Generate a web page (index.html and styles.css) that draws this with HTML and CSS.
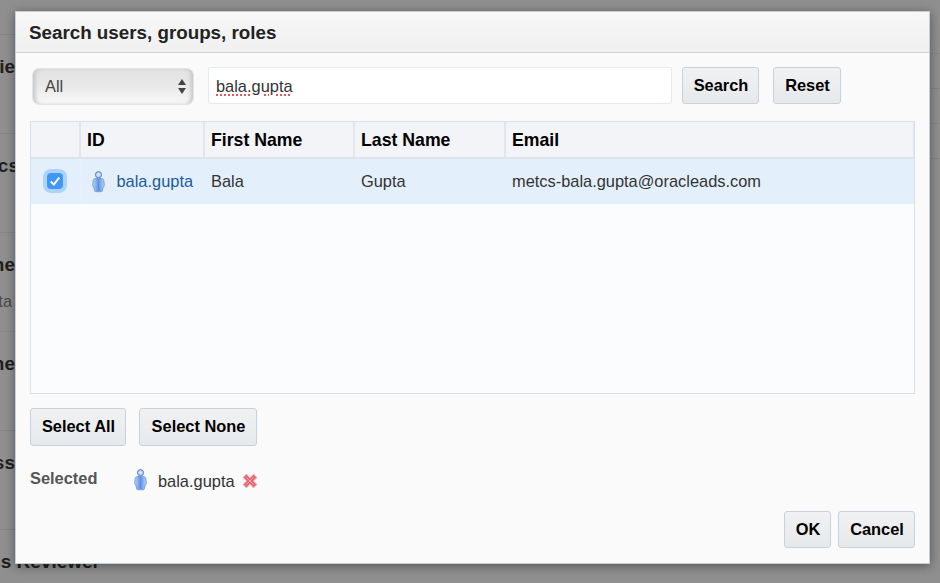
FILE: index.html
```html
<!DOCTYPE HTML>
<html lang="en">
<head>
  <title>Search users, groups, roles</title>
  <meta content="text/html;charset=utf-8" http-equiv="Content-type"/>
  <link rel="stylesheet" href="styles.css">
</head>
<body>
<svg class="defs" width="0" height="0" aria-hidden="true">
  <defs>
    <radialGradient id="personHead" cx="0.5" cy="0.5" r="0.6">
      <stop offset="0" stop-color="#e8f0fc"/>
      <stop offset="1" stop-color="#8fb1e8"/>
    </radialGradient>
    <linearGradient id="personBody" x1="0" y1="0" x2="1" y2="0">
      <stop offset="0" stop-color="#c2d5f2"/>
      <stop offset="0.5" stop-color="#5a92ea"/>
      <stop offset="1" stop-color="#c2d5f2"/>
    </linearGradient>
    <symbol id="person" viewBox="0 0 13 22">
      <circle cx="6.500" cy="3.700" r="3.100" fill="url(#personHead)" stroke="#5f86c2" stroke-width="1"/>
      <path d="M3.500 7.500h6c1.400 0 2.200.8 2.300 2.100l.5 4.800c.1 1-.4 1.500-1.300 1.500l-.5 3.600c-.1.800-.6 1.200-1.300 1.200H3.800c-.7 0-1.200-.4-1.300-1.200L2 15.900c-.9 0-1.400-.5-1.300-1.500l.5-4.800c.1-1.300.9-2.100 2.300-2.100z" fill="url(#personBody)" stroke="#7c9fd2" stroke-width="1"/>
    </symbol>
    <symbol id="remove" viewBox="0 0 16 16">
      <path d="M4.500 1 8 4.800 11.500 1 15 4.500 11.500 8l3.500 3.500-3.500 3.500L8 11.200 4.500 15 1 11.500 4.500 8 1 4.500z" fill="#f0636f" stroke="#d2cccc" stroke-width="1"/>
      <path d="M4.500 4.500 8 8l3.500-3.500M4.500 11.500 8 8l3.500 3.500" fill="none" stroke="#f8a9af" stroke-width="1"/>
    </symbol>
  </defs>
</svg>

<!-- page behind the dialog -->
<div class="backdrop">
  <div class="rows">
    <div class="row"><div class="rowTitle">ie</div></div>
    <div class="row"><div class="rowTitle rowTitleCs">ics</div></div>
    <div class="row"><div class="rowTitle">ne</div><div class="rowSub">ta</div></div>
    <div class="row"><div class="rowTitle">ne</div></div>
    <div class="row"><div class="rowTitle">ss</div></div>
    <div class="row rowLast"><div class="rowTitle rowTitleLong">ss Reviewer</div></div>
  </div>
  <div class="sideLines">
    <div class="sideLine"></div>
    <div class="sideLine"></div>
    <div class="sideLine"></div>
    <div class="sideLine"></div>
  </div>
</div>

<div class="dialog">
  <div class="dialogHeader">Search users, groups, roles</div>
  <div class="dialogBody">
    <div class="searchBar">
      <div class="selectWrap">
        <select class="typeSelect"><option>All</option></select>
        <svg class="selectArrows" width="8" height="15" viewBox="0 0 8 15"><path d="M4 0 8 6H0zM0 9h8l-4 6z" fill="#444"/></svg>
      </div>
      <input class="searchInput" type="text" value="bala.gupta"/>
      <button class="btn btnSearch">Search</button>
      <button class="btn btnReset">Reset</button>
    </div>

    <div class="results">
      <table>
        <colgroup>
          <col class="colCheck"><col class="colId"><col class="colFirst"><col class="colLast"><col>
        </colgroup>
        <thead>
        <tr>
          <th></th>
          <th>ID</th>
          <th>First Name</th>
          <th>Last Name</th>
          <th>Email</th>
        </tr>
        </thead>
        <tbody>
        <tr>
          <td class="checkCell">
            <span class="check">
              <svg width="12" height="12" viewBox="0 0 12 12"><path d="M1.800 6.500 4.800 9.500 10.200 2.600" fill="none" stroke="#fff" stroke-width="2"/></svg>
            </span>
          </td>
          <td><a class="userLink" href="#"><svg class="personIcon" width="13" height="22"><use href="#person"/></svg>bala.gupta</a></td>
          <td>Bala</td>
          <td>Gupta</td>
          <td>metcs-bala.gupta@oracleads.com</td>
        </tr>
        </tbody>
      </table>
    </div>

    <div class="selectBtns">
      <button class="btn btnSelectAll">Select All</button>
      <button class="btn btnSelectNone">Select None</button>
    </div>

    <div class="selectedRow">
      <div class="selectedLabel">Selected</div>
      <svg class="personIcon selectedIcon" width="13" height="22"><use href="#person"/></svg>
      <span class="selectedName">bala.gupta</span>
      <svg class="removeIcon" width="16" height="16"><use href="#remove"/></svg>
    </div>

    <div class="dialogFooter">
      <button class="btn btnOk">OK</button>
      <button class="btn btnCancel">Cancel</button>
    </div>
  </div>
</div>
</body>
</html>
```

FILE: styles.css
```css
html, body {
    margin: 0;
}

body {
    width: 940px;
    height: 583px;
    overflow: hidden;
    position: relative;
    font-family: 'Liberation Sans', Arial, sans-serif;
    font-size: 16.4px;
    color: #333;
    background-color: #8f8f8f;
}

.defs {
    position: absolute;
}

/* page behind the dialog */
.backdrop {
    height: 583px;
    overflow: hidden;
    display: flex;
    justify-content: space-between;
}

.rows {
    width: 15px;
    padding-top: 34px;
}

.row {
    height: 77px;
    padding-top: 21px;
    border-top: 1px solid #858585;
}

.rowLast {
    height: 22px;
}

/* titles run in from the left edge and end behind the dialog */
.rowTitle {
    display: flex;
    justify-content: flex-end;
    width: 15px;
    font-size: 19px;
    font-weight: bold;
    line-height: 22px;
    white-space: nowrap;
    color: #1f1f1f;
}

.rowTitleCs {
    width: 19px;
}

.rowTitleLong {
    width: 100px;
}

.rowSub {
    display: flex;
    justify-content: flex-end;
    width: 12px;
    margin-top: 16px;
    line-height: 18px;
    white-space: nowrap;
    color: #4a4a4a;
}

.sideLines {
    width: 10px;
    padding-top: 53px;
}

.sideLine {
    height: 34px;
    border-top: 1px solid #858585;
}

.dialog {
    position: absolute;
    left: 15px;
    top: 11px;
    width: 913px;
    height: 551px;
    display: flex;
    flex-direction: column;
    background: #fafafa;
    border: 1px solid #c3ced8;
    box-shadow: 0 2px 10px rgba(0, 0, 0, 0.4);
}

.dialogHeader {
    flex: none;
    height: 40px;
    padding-left: 13px;
    line-height: 41px;
    font-size: 18.8px;
    font-weight: bold;
    color: #222;
    background: linear-gradient(#f7f7f7, #f0f0f0);
    border-bottom: 1px solid #c5d5e2;
}

.dialogBody {
    flex: auto;
    display: flex;
    flex-direction: column;
    padding: 14px 14px 15px;
}

.searchBar {
    display: flex;
    align-items: flex-start;
    height: 54px;
}

.selectWrap {
    position: relative;
    width: 162px;
    height: 37px;
    margin: 1px 14px 0 2px;
}

.typeSelect {
    appearance: none;
    width: 100%;
    height: 100%;
    padding: 0 0 2px 12px;
    font-family: inherit;
    font-size: 16.4px;
    color: #444;
    border: 1px solid #e2e6ea;
    border-radius: 7px;
    background: linear-gradient(#e2e2e2, #e8e8e8 45%, #f8f8f8);
    box-shadow: inset 4px 0 4px -2px #c2c2c2, inset -4px 0 4px -2px #c2c2c2;
}

.selectArrows {
    position: absolute;
    right: 8px;
    top: 11px;
}

.searchInput {
    width: 464px;
    height: 37px;
    box-sizing: border-box;
    padding: 2px 7px 0;
    margin-right: 10px;
    font-family: inherit;
    font-size: 16.4px;
    color: #333;
    background: #fff;
    border: 1px solid #e6ebf0;
    border-radius: 2px;
    outline: none;
    text-decoration: underline dotted #e8555c 2px;
    text-underline-offset: 2px;
}

.btn {
    height: 37px;
    padding: 0 0 0 1px;
    white-space: nowrap;
    font-family: inherit;
    font-size: 16.4px;
    font-weight: bold;
    color: #000;
    background: linear-gradient(#f0f1f3, #e6e9eb);
    border: 1px solid #c5d2dd;
    border-radius: 3px;
}

.btnSearch {
    width: 77px;
    margin-right: 14px;
}

.btnReset {
    width: 68px;
}

.results {
    flex: none;
    height: 271px;
    overflow: hidden;
    border: 1px solid #d9e1e8;
    background: #fbfcfd;
}

table {
    border-collapse: collapse;
    width: 884px;
    table-layout: fixed;
}

.colCheck {
    width: 49px;
}

.colId {
    width: 124px;
}

.colFirst {
    width: 150px;
}

.colLast {
    width: 151px;
}

table th {
    height: 34px;
    padding: 1px 6px 0;
    text-align: left;
    font-size: 17.7px;
    color: #000;
    background: #f3f4f7;
    border-right: 2px solid #e1e6ec;
    border-bottom: 2px solid #dde4ec;
}

table td {
    height: 45px;
    padding: 0 7px;
    background: #e3f0fb;
    white-space: nowrap;
}

.checkCell {
    border-right: 1px solid #e9f0f7;
    text-align: center;
}

.check {
    display: inline-flex;
    align-items: center;
    justify-content: center;
    width: 16px;
    height: 16px;
    margin-bottom: 2px;
    vertical-align: middle;
    background: #3f98f7;
    border-radius: 4px;
    box-shadow: 0 0 0 4px #aed3f9;
}

.userLink {
    display: flex;
    align-items: center;
    color: #1c5a9c;
    text-decoration: none;
}

.personIcon {
    flex: none;
    margin: 0 12px 0 4px;
}

.selectBtns {
    display: flex;
    gap: 13px;
    margin-top: 14px;
}

.btnSelectAll {
    width: 96px;
    height: 38px;
    padding-bottom: 2px;
}

.btnSelectNone {
    width: 118px;
    height: 38px;
    padding-bottom: 2px;
}

.selectedRow {
    display: flex;
    align-items: center;
    height: 22px;
    margin-top: 24px;
}

.selectedLabel {
    width: 99px;
    margin-top: -6px;
    font-weight: bold;
    color: #555;
}

.selectedIcon {
    margin: -2px 11px 0 5px;
}

.selectedName {
    margin-right: 7px;
}

.removeIcon {
    flex: none;
}

.dialogFooter {
    display: flex;
    justify-content: flex-end;
    gap: 7px;
    margin-top: auto;
}

.btnOk {
    width: 47px;
}

.btnCancel {
    width: 77px;
}
```
